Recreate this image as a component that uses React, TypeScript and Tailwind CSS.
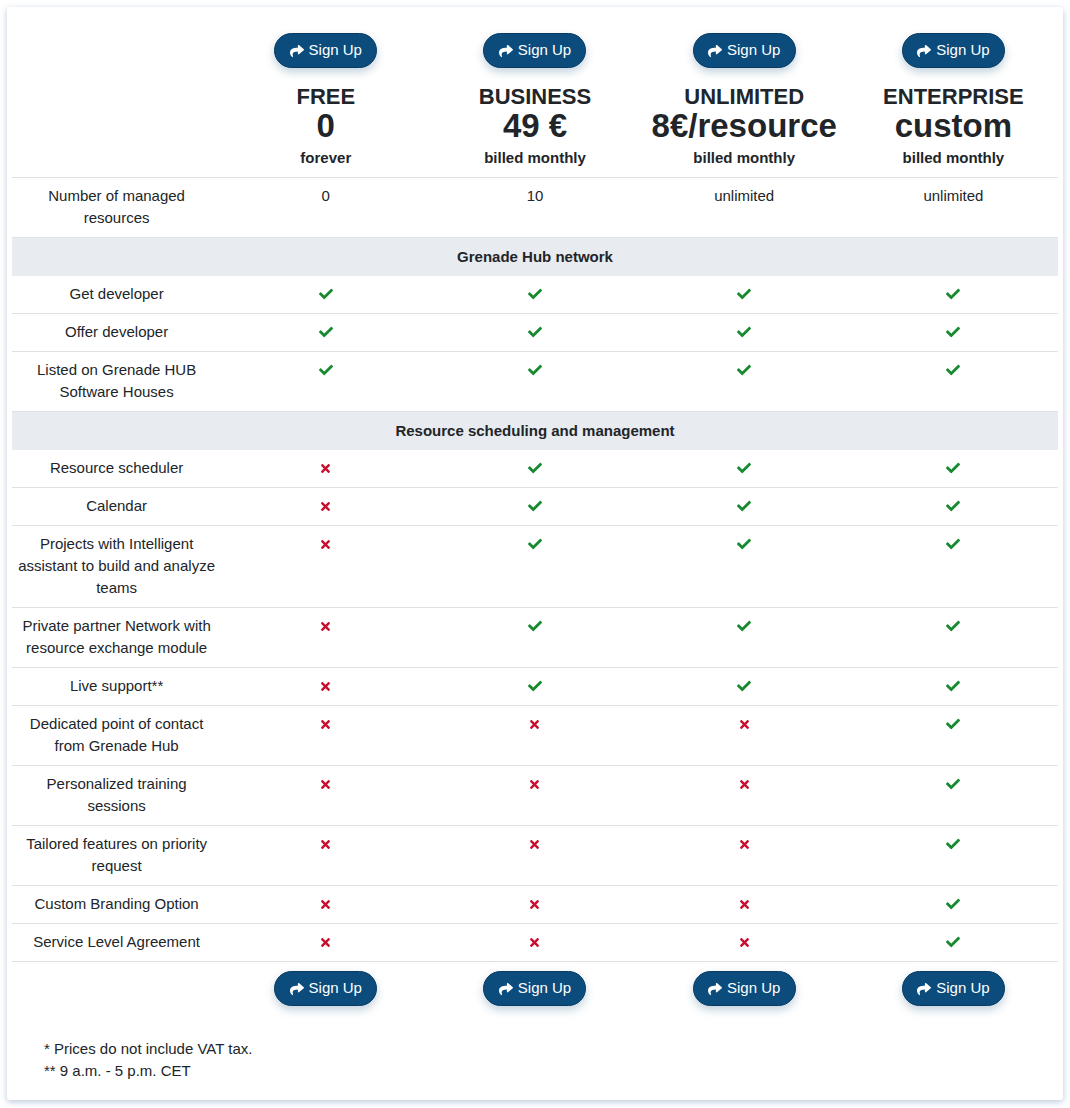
import React from "react";
import { FaShare, FaCheck, FaTimes } from "react-icons/fa";

type V = boolean | string;

const Check = () => <FaCheck className="inline-block text-[#178a30]" style={{ width: 14, height: 14 }} />;
const Cross = () => <FaTimes className="inline-block text-[#c8102e]" style={{ width: 11, height: 13 }} />;

const SignUp = () => (
  <button className="inline-flex items-center justify-center gap-[5px] h-[35px] w-[103px] rounded-full bg-[#0b4c7d] border border-[#083a61] text-white text-[15px] shadow-[0_4px_8px_rgba(11,76,125,0.25)]">
    <FaShare style={{ width: 14, height: 14 }} />
    <span>Sign Up</span>
  </button>
);

const plans = [
  { name: "FREE", price: "0", note: "forever" },
  { name: "BUSINESS", price: "49 €", note: "billed monthly" },
  { name: "UNLIMITED", price: "8€/resource", note: "billed monthly" },
  { name: "ENTERPRISE", price: "custom", note: "billed monthly" },
];

type Row = { type: "row"; label: string; vals: V[] } | { type: "section"; label: string };

const rows: Row[] = [
  { type: "row", label: "Number of managed resources", vals: ["0", "10", "unlimited", "unlimited"] },
  { type: "section", label: "Grenade Hub network" },
  { type: "row", label: "Get developer", vals: [true, true, true, true] },
  { type: "row", label: "Offer developer", vals: [true, true, true, true] },
  { type: "row", label: "Listed on Grenade HUB Software Houses", vals: [true, true, true, true] },
  { type: "section", label: "Resource scheduling and management" },
  { type: "row", label: "Resource scheduler", vals: [false, true, true, true] },
  { type: "row", label: "Calendar", vals: [false, true, true, true] },
  { type: "row", label: "Projects with Intelligent assistant to build and analyze teams", vals: [false, true, true, true] },
  { type: "row", label: "Private partner Network with resource exchange module", vals: [false, true, true, true] },
  { type: "row", label: "Live support**", vals: [false, true, true, true] },
  { type: "row", label: "Dedicated point of contact from Grenade Hub", vals: [false, false, false, true] },
  { type: "row", label: "Personalized training sessions", vals: [false, false, false, true] },
  { type: "row", label: "Tailored features on priority request", vals: [false, false, false, true] },
  { type: "row", label: "Custom Branding Option", vals: [false, false, false, true] },
  { type: "row", label: "Service Level Agreement", vals: [false, false, false, true] },
];

export default function App() {
  return (
    <div className="min-h-[1108px] bg-white pt-[7px] px-[7px] pb-[8px]" style={{ fontFamily: '"Liberation Sans", Arial, sans-serif' }}>
      <div className="bg-white rounded-[3px] shadow-[0_2px_6px_rgba(60,100,150,0.35)] px-[5px] pt-[26px] pb-[18px] text-[#212529]">
        {/* header */}
        <div className="grid grid-cols-5 pb-[8px]">
          <div />
          {plans.map((p) => (
            <div key={p.name} className="flex flex-col items-center">
              <SignUp />
              <div className="mt-[17px] text-[22px] font-bold leading-[24px]">{p.name}</div>
              <div className="text-[33px] font-bold leading-[34px]">{p.price}</div>
              <div className="mt-[4px] text-[15px] font-bold leading-[22px]">{p.note}</div>
            </div>
          ))}
        </div>
        {rows.map((r, i) =>
          r.type === "section" ? (
            <div key={i} className="border-t border-[#dee2e6] bg-[#e8ebef] text-center text-[15px] font-bold leading-[22px] py-[8px] -mb-px relative">
              {r.label}
            </div>
          ) : (
            <div key={i} className="grid grid-cols-5 border-t border-[#dee2e6] text-[15px] leading-[22px]">
              <div className="px-[6px] pt-[7px] pb-[8px] text-center">{r.label}</div>
              {r.vals.map((v, j) => (
                <div key={j} className="pt-[7px] pb-[8px] text-center flex justify-center items-start">
                  {typeof v === "string" ? (
                    <span>{v}</span>
                  ) : (
                    <span className="h-[22px] flex items-center">{v ? <Check /> : <Cross />}</span>
                  )}
                </div>
              ))}
            </div>
          )
        )}
        <div className="grid grid-cols-5 border-t border-[#dee2e6] pt-[9px]">
          <div />
          {plans.map((p) => (
            <div key={p.name} className="flex justify-center">
              <SignUp />
            </div>
          ))}
        </div>
        <div className="mt-[32px] pl-[32px] text-[15px] leading-[22px]">
          <div>* Prices do not include VAT tax.</div>
          <div>** 9 a.m. - 5 p.m. CET</div>
        </div>
      </div>
    </div>
  );
}
